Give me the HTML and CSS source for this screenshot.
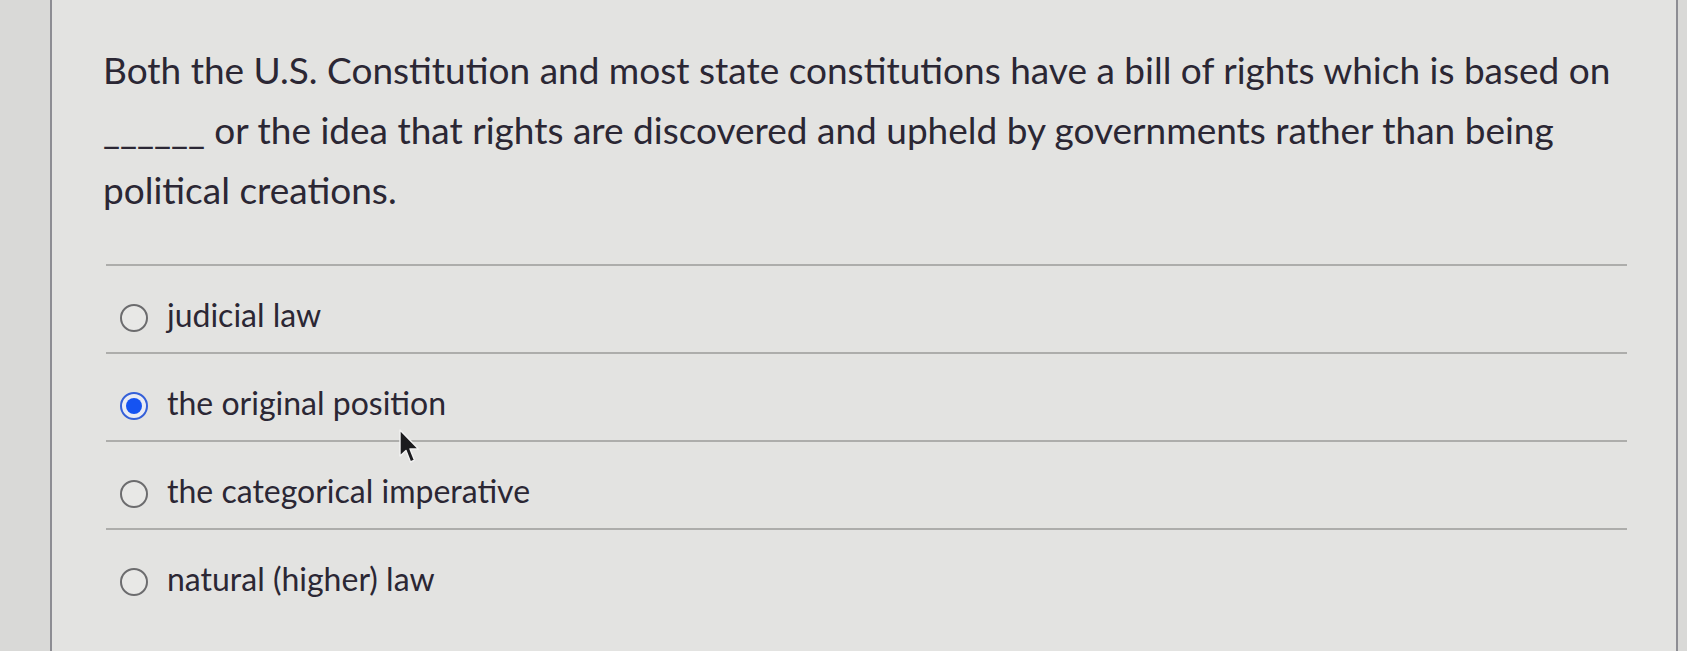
FILE: index.html
```html
<!DOCTYPE html>
<html lang="en">
<head>
<meta charset="utf-8">
<title>Question</title>
<link rel="stylesheet" href="styles.css">
</head>
<body>
<div class="page">
  <div class="panel">
    <p class="question">Both the U.S. Constitution and most state constitutions have a bill of rights which is based on ______ or the idea that rights are discovered and upheld by governments rather than being political creations.</p>
    <div class="options">
      <label class="option"><span class="radio"></span><span class="label">judicial law</span></label>
      <label class="option"><span class="radio checked"><span class="dot"></span></span><span class="label">the original position</span></label>
      <label class="option"><span class="radio"></span><span class="label">the categorical imperative</span></label>
      <label class="option"><span class="radio"></span><span class="label">natural (higher) law</span></label>
    </div>
    <svg class="cursor" width="22" height="36" viewBox="0 0 22 36" aria-hidden="true">
      <path d="M1 1 L1 27 L7 21.5 L11.5 33 L15.5 31.2 L11 20 L19.5 20 Z" fill="#1b1b1e" stroke="#f2f2f2" stroke-width="1.4" stroke-linejoin="round"/>
    </svg>
  </div>
</div>
</body>
</html>
```
FILE: styles.css
```css
html, body {
  margin: 0;
  padding: 0;
}
body {
  background: #d9d9d7;
  font-family: Lato, "Open Sans", sans-serif;
  color: #2b2734;
  overflow: hidden;
}
.page {
  height: 651px;
  padding-left: 50px;
  box-sizing: border-box;
}
.panel {
  position: relative;
  width: 1628px;
  height: 651px;
  box-sizing: border-box;
  background: #e3e3e1;
  border-left: 2px solid #8d8d93;
  border-right: 2px solid #8d8d93;
  padding: 40px 0 0 51px;
}
.question {
  margin: 0;
  width: 1535px;
  font-size: 37px;
  line-height: 60px;
}
.options {
  margin: 44px 0 0 3px;
  width: 1521px;
}
.option {
  display: flex;
  align-items: center;
  height: 76px;
  padding-top: 10px;
  border-top: 2px solid #adadab;
  padding-left: 14px;
  box-sizing: content-box;
}
.radio {
  flex: none;
  width: 28px;
  height: 28px;
  box-sizing: border-box;
  border: 2px solid #6c6c6e;
  border-radius: 50%;
  margin-top: 8px;
  margin-right: 19px;
  background: #e8e8e6;
  display: flex;
  align-items: center;
  justify-content: center;
}
.radio.checked {
  border: 2.5px solid #3560d8;
  background: #e9ebf4;
}
.dot {
  width: 16px;
  height: 16px;
  border-radius: 50%;
  background: #1553f2;
}
.label {
  font-size: 32px;
  line-height: 40px;
  margin-top: 2px;
}
.cursor {
  position: absolute;
  left: 347px;
  top: 429px;
}
```
